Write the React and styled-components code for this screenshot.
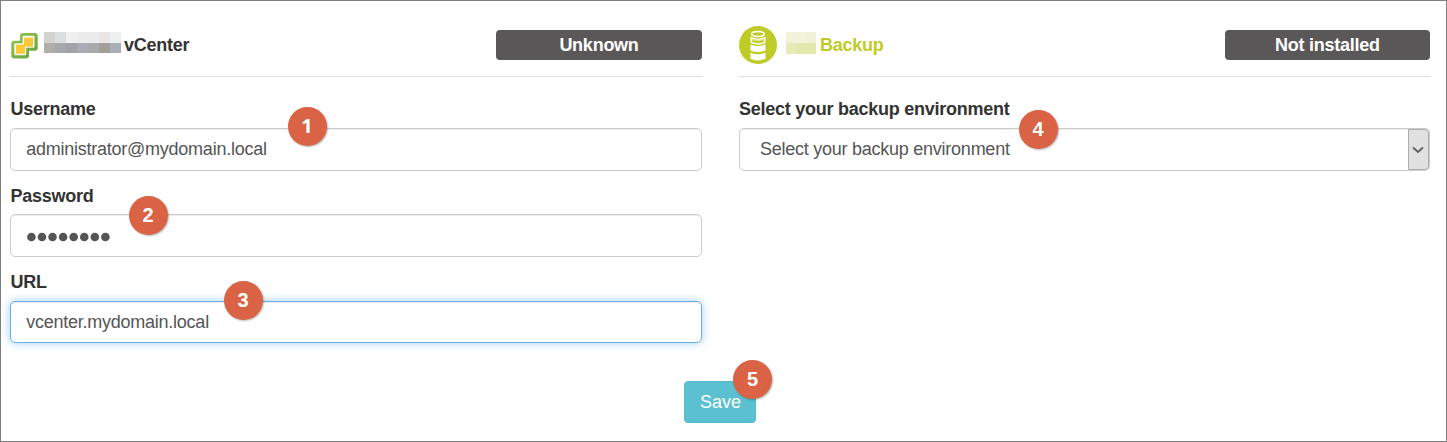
import React from 'react';
import styled, { createGlobalStyle } from 'styled-components';

const GlobalStyle = createGlobalStyle`
  * { box-sizing: border-box; }
  body { margin: 0; background: #fff; font-family: "Liberation Sans", Arial, sans-serif; font-size: 18px; letter-spacing: -0.25px; color: #333; }
`;

const Frame = styled.main`
  width: 1447px;
  height: 442px;
  border: 1px solid #7f7f7f;
  padding: 19px 16px 0 9px;
  display: flex;
  flex-direction: column;
  overflow: hidden;
`;

const Columns = styled.div`
  display: grid;
  grid-template-columns: 692px 691px;
  column-gap: 37px;
  height: 361px;
`;

const Panel = styled.section`
  display: flex;
  flex-direction: column;
`;

const PanelHeader = styled.header`
  display: flex;
  align-items: center;
  height: 57px;
  padding-bottom: 6px;
  border-bottom: 1px solid #ddd;
`;

const Title = styled.h2`
  margin: 0 auto 0 ${({ $gap }) => $gap}px;
  font-size: 18px;
  line-height: 22px;
  color: ${({ $color }) => $color};
`;

const Mosaic = styled.div`
  display: grid;
  grid-template-columns: repeat(${({ $columns }) => $columns}, 1fr);
  grid-template-rows: 11px 1fr;
  width: ${({ $width }) => $width}px;
  height: ${({ $height }) => $height}px;
  margin: 0 0 5px ${({ $gap }) => $gap}px;
`;

const Tile = styled.span`
  background: ${({ $color }) => $color};
`;

const Status = styled.div`
  width: ${({ $width }) => $width}px;
  height: 30px;
  border-radius: 4px;
  background: #5a5758;
  color: #fff;
  font-weight: bold;
  line-height: 30px;
  text-align: center;
`;

const Field = styled.div`
  display: flex;
  flex-direction: column;
  margin-top: ${({ $top }) => $top}px;
`;

const Label = styled.label`
  height: 22px;
  margin-bottom: ${({ $gap = 8 }) => $gap}px;
  padding-left: ${({ $indent = 0.5 }) => $indent}px;
  line-height: 22px;
  font-weight: bold;
`;

const Control = styled.div`
  position: relative;
  display: flex;
  align-items: center;
  height: ${({ $height = 43 }) => $height}px;
  padding-left: ${({ $indent = 15.3 }) => $indent}px;
  border: 1px solid ${({ $focused }) => ($focused ? '#66afe9' : '#ccc')};
  border-radius: 5px;
  color: #555;
  line-height: 24px;
  box-shadow: ${({ $focused }) =>
    $focused
      ? 'inset 0 1px 1px rgba(0,0,0,.075), 0 0 10px rgba(102,175,233,.6)'
      : 'inset 0 1px 1px rgba(0,0,0,.075)'};
`;

const Value = styled.span`
  padding-bottom: ${({ $lift = 0 }) => $lift}px;
`;

const MaskedValue = styled.svg`
  margin-top: 3px;
  fill: #555;
`;

const Arrow = styled.span`
  display: flex;
  align-items: center;
  justify-content: center;
  width: 21px;
  height: 41px;
  margin-left: auto;
  padding-right: 1px;
  border: 1px solid #adadad;
  border-radius: 0 4px 4px 0;
  background: #e1e1e1;
`;

const Badge = styled.span`
  position: absolute;
  left: ${({ $x }) => $x}px;
  top: ${({ $y }) => $y}px;
  width: 39px;
  height: 39px;
  border-radius: 50%;
  background: #d96344;
  box-shadow: 1px 1px 2px rgba(0, 0, 0, 0.28);
  color: #fff;
  font: bold 20px/38px ${({ $face = '"Liberation Sans"' }) => $face}, sans-serif;
  letter-spacing: 0;
  text-align: center;
`;

const SaveButton = styled.button`
  position: relative;
  align-self: flex-start;
  width: 72px;
  height: 42px;
  margin-left: 674px;
  padding: 0 0 0 1px;
  border: 1px solid #54bace;
  border-radius: 4px;
  background: #5bc0d0;
  color: #fff;
  font: 18px/40px "Liberation Sans", Arial, sans-serif;
`;

const VCenterIcon = () => (
  <svg width="28" height="28" viewBox="0 0 28 28">
    <defs>
      <linearGradient id="vcenter-green" x1="0" y1="0" x2="1" y2="1">
        <stop offset="0" stopColor="#93c954" />
        <stop offset="1" stopColor="#649f3b" />
      </linearGradient>
    </defs>
    <path
      d="M13 2h11.700q3 0 3 3v11.700q0 3-3 3H19v4.700q0 3-3 3H4.300q-3 0-3-3V12.700q0-3 3-3H10V5q0-3 3-3z"
      fill="url(#vcenter-green)"
    />
    <g fill="#f5f8e6">
      <rect x="12.500" y="4.800" width="12" height="12" rx="1" />
      <rect x="4.200" y="12.200" width="12" height="12" rx="1" />
    </g>
    <g fill="#fbc938">
      <rect x="14" y="6.700" width="9" height="9" />
      <rect x="6" y="13.700" width="9" height="9" />
    </g>
  </svg>
);

const BackupIcon = () => (
  <svg width="38" height="38" viewBox="0 0 38 38">
    <circle cx="19" cy="19" r="19" fill="#bfcb27" />
    <ellipse cx="19" cy="8" rx="6.300" ry="2.400" fill="none" stroke="#fff" strokeWidth="1.500" />
    <path d="M12 11.500q7 3.500 14 0v5q-7 3.500-14 0z" fill="#dce388" stroke="#fff" strokeWidth="1.100" />
    <path d="M13.500 15q5.500 2 11 0" fill="none" stroke="#bfcb27" strokeWidth="1.400" />
    <g fill="#fff">
      <path d="M11.500 18.500q7.500 3 15 0v6q-7.500 3-15 0z" />
      <path d="M11.500 26.700q7.500 3 15 0v6q-7.500 3.500-15 0z" />
    </g>
  </svg>
);

const vcenterTiles = ['#d5d3cf', '#dbdedf', '#efefef', '#ebebec', '#ebebeb', '#e8e5e3', '#eeeff1', '#b1ada8', '#a7a8ad', '#a1a3a6', '#a9acb4', '#a7a9aa', '#a29f98', '#a9afb6'];
const backupTiles = ['#f1f4d9', '#f1f4d9', '#eff1d8', '#e6ebb8', '#e2e8ad', '#e2e8ad'];

const NameMosaic = ({ tiles, width, height, gap }) => (
  <Mosaic $columns={tiles.length / 2} $width={width} $height={height} $gap={gap}>
    {tiles.map((color, i) => <Tile key={i} $color={color} />)}
  </Mosaic>
);

export default function App() {
  return (
    <>
      <GlobalStyle />
      <Frame>
        <Columns>
          <Panel>
            <PanelHeader>
              <VCenterIcon />
              <NameMosaic tiles={vcenterTiles} width={77} height={21} gap={6} />
              <Title $color="#333" $gap={3}>vCenter</Title>
              <Status $width={206}>Unknown</Status>
            </PanelHeader>
            <Field $top={21}>
              <Label>Username</Label>
              <Control>
                <Value $lift={2}>administrator@mydomain.local</Value>
                <Badge $x={276.5} $y={-22} $face={'"Open Sans"'}>1</Badge>
              </Control>
            </Field>
            <Field $top={14}>
              <Label $gap={7}>Password</Label>
              <Control>
                <MaskedValue width="90" height="10" viewBox="0 0 90 10">
                  {Array.from({ length: 8 }, (_, i) => <circle key={i} cx={5.4 + i * 10.57} cy="5" r="4.3" />)}
                </MaskedValue>
                <Badge $x={117.5} $y={-19}>2</Badge>
              </Control>
            </Field>
            <Field $top={14}>
              <Label>URL</Label>
              <Control $focused $height={42}>
                <Value>vcenter.mydomain.local</Value>
                <Badge $x={212.5} $y={-21}>3</Badge>
              </Control>
            </Field>
          </Panel>
          <Panel>
            <PanelHeader>
              <BackupIcon />
              <NameMosaic tiles={backupTiles} width={30} height={22} gap={9} />
              <Title $color="#bfcb27" $gap={4}>Backup</Title>
              <Status $width={205}>Not installed</Status>
            </PanelHeader>
            <Field $top={21}>
              <Label $indent={0}>Select your backup environment</Label>
              <Control $indent={20}>
                <Value $lift={2}>Select your backup environment</Value>
                <Arrow>
                  <svg width="12" height="8" viewBox="0 0 12 8" fill="none" stroke="#606060" strokeWidth="1.8">
                    <path d="M1 1.500l5 4.500 5-4.500" />
                  </svg>
                </Arrow>
                <Badge $x={278.5} $y={-19}>4</Badge>
              </Control>
            </Field>
          </Panel>
        </Columns>
        <SaveButton type="button">
          Save
          <Badge $x={48} $y={-22.5}>5</Badge>
        </SaveButton>
      </Frame>
    </>
  );
}
